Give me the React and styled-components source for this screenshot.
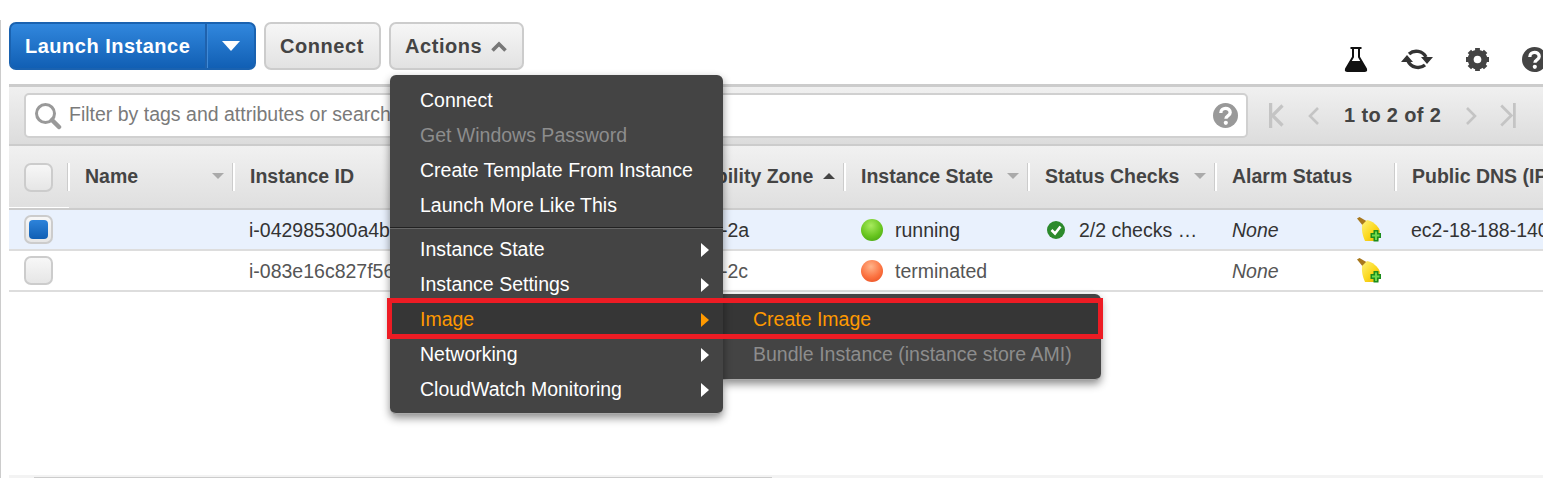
import React from 'react';
import styled, { createGlobalStyle } from 'styled-components';

const GlobalStyle = createGlobalStyle`
  html, body {
    margin: 0;
    padding: 0;
    background: #fff;
    overflow: hidden;
  }
  body {
    font-family: "Liberation Sans", Arial, sans-serif;
    color: #444;
  }
`;

const COLUMNS = '60px 165px 197px 217px 197px 184px 187px 180px 1fr';

const Page = styled.div`
  position: relative;
  width: 1543px;
  height: 478px;
  overflow: hidden;
  box-sizing: border-box;
  padding-left: 9px;
  display: flex;
  flex-direction: column;

  &::before {
    content: '';
    position: absolute;
    left: 0;
    top: 20px;
    bottom: 0;
    width: 1px;
    background: #ccc;
  }
`;

const Toolbar = styled.div`
  height: 84px;
  box-sizing: border-box;
  padding-top: 22px;
  display: flex;
  align-items: flex-start;
  gap: 8px;
`;

const SplitButton = styled.div`
  width: 247px;
  height: 48px;
  box-sizing: border-box;
  display: flex;
  border: 2px solid #1a62b0;
  border-radius: 7px;
  background: linear-gradient(#3187dd, #115fb4);
  color: #fff;
  font-weight: 700;
  font-size: 20px;
  overflow: hidden;
`;

const SplitLabel = styled.div`
  flex: 1;
  padding-left: 14px;
  line-height: 44px;
  letter-spacing: 0.5px;
`;

const SplitCaret = styled.div`
  width: 47px;
  border-left: 2px solid #1f62ad;
  box-shadow: inset 1px 0 0 #3f8ad8;
  display: flex;
  align-items: center;
  justify-content: center;
`;

const GreyButton = styled.div`
  width: ${(p) => p.$width}px;
  height: 48px;
  box-sizing: border-box;
  border: 2px solid #ccc;
  border-radius: 7px;
  background: linear-gradient(#f6f6f6, #e2e2e2);
  color: #444;
  font-weight: 700;
  font-size: 20px;
  letter-spacing: 0.55px;
  line-height: 44px;
  padding-left: 14px;
  display: flex;
  align-items: center;
  gap: 9px;
`;

const ToolIcons = styled.div`
  margin-left: auto;
  margin-right: -4px;
  padding-top: 24px;
  display: flex;
  align-items: center;
  gap: 33px;
  color: #444;
`;

const FilterBar = styled.div`
  height: 62px;
  box-sizing: border-box;
  border-top: 3px solid #ccc;
  border-bottom: 2px solid #ccc;
  background: linear-gradient(#f0f0f0, #dcdcdc);
  display: flex;
  align-items: center;
  padding-left: 15px;
`;

const FilterInput = styled.div`
  width: 1224px;
  height: 45px;
  box-sizing: border-box;
  background: #fff;
  border: 2px solid #d0d0d0;
  border-radius: 5px;
  display: flex;
  align-items: center;
  padding: 0 8px;
  color: #7a7a7a;
  font-size: 19.5px;
  gap: 7px;
`;

const FilterText = styled.span`
  flex: 1;
  white-space: nowrap;
  padding-bottom: 2px;
`;

const Pager = styled.div`
  display: flex;
  align-items: center;
  margin-left: 20px;
  gap: 20px;
`;

const PagerText = styled.span`
  font-weight: 700;
  font-size: 20px;
  letter-spacing: 0.35px;
  color: #444;
  margin: 0 3px;
  white-space: nowrap;
`;

const HeaderRow = styled.div`
  position: relative;
  display: grid;
  grid-template-columns: ${COLUMNS};
  height: 64px;
  box-sizing: border-box;
  background: linear-gradient(#f1f1f1, #dfdfdf);
  border-bottom: 2px solid #ccc;

  &::after {
    content: '';
    position: absolute;
    left: 0;
    bottom: 0;
    width: 60px;
    height: 1px;
    background: #fff;
  }
`;

const HeaderCell = styled.div`
  position: relative;
  display: flex;
  align-items: center;
  padding: 0 10px 0 ${(p) => p.$pad ?? 16}px;
  height: 60px;
  font-size: 19.5px;
  font-weight: 700;
  color: #444;
  white-space: nowrap;

  &::before {
    content: '';
    position: absolute;
    left: -2px;
    top: 17px;
    width: 1px;
    height: 28px;
    background: #ccc;
    box-shadow: 1px 0 0 #fff, 2px 0 0 #fff;
  }
`;

const HeaderLabel = styled.span`
  flex: 1;
  min-width: 0;
`;

const SortArrow = styled.span`
  width: 0;
  height: 0;
  border-left: 6px solid transparent;
  border-right: 6px solid transparent;
  ${(p) =>
    p.$up
      ? 'border-bottom: 6px solid #444;'
      : 'border-top: 6px solid #aaa;'}
`;

const CheckCell = styled.div`
  display: flex;
  align-items: center;
  padding-left: 15px;
`;

const CheckBox = styled.div`
  width: 29px;
  height: 29px;
  box-sizing: border-box;
  border: 2px solid #ccc;
  border-radius: 7px;
  background: linear-gradient(#f7f7f7, #e6e6e6);
  display: flex;
  align-items: center;
  justify-content: center;
`;

const CheckFill = styled.div`
  width: 19px;
  height: 19px;
  border-radius: 4px;
  background: linear-gradient(#2d83da, #115fb4);
`;

const Row = styled.div`
  display: grid;
  grid-template-columns: ${COLUMNS};
  height: 41px;
  box-sizing: border-box;
  background: ${(p) => (p.$selected ? '#e9f1fd' : '#fff')};
  border-bottom: 2px solid #ddd;
  font-size: 19.5px;
  color: ${(p) => (p.$selected ? '#333' : '#555')};
`;

const Cell = styled.div`
  display: flex;
  align-items: center;
  padding-left: ${(p) => p.$pad ?? 15}px;
  padding-top: 2px;
  gap: ${(p) => p.$gap ?? 12}px;
  white-space: nowrap;
  overflow: hidden;
  font-style: ${(p) => (p.$italic ? 'italic' : 'normal')};
`;

const AlarmText = styled.span`
  width: 125px;
`;

const StateDot = styled.span`
  width: 22px;
  height: 22px;
  border-radius: 50%;
  flex: none;
  margin-top: -2px;
  background: ${(p) =>
    p.$state === 'running'
      ? 'radial-gradient(circle at 45% 30%, #a8ea5e, #68c51f 55%, #3f9d10)'
      : 'radial-gradient(circle at 45% 30%, #ffb48a, #fb7240 55%, #e6481b)'};
`;

const BottomBar = styled.div`
  margin-top: auto;
  height: 3px;
  background: #f3f3f3;
  position: relative;

  &::after {
    content: '';
    position: absolute;
    left: 25px;
    bottom: 0;
    width: 738px;
    height: 1px;
    background: #ccc;
  }
`;

const Menu = styled.div`
  position: absolute;
  left: 390px;
  top: 75px;
  width: 333px;
  height: 339px;
  box-sizing: border-box;
  padding-top: 8px;
  background: #444;
  border-radius: 6px;
  border-bottom: 1px solid #aaa;
  box-shadow: 0 4px 8px rgba(0, 0, 0, 0.45);
  z-index: 3;
`;

const SubMenu = styled.div`
  position: absolute;
  left: 723px;
  top: 294px;
  width: 378px;
  height: 86px;
  box-sizing: border-box;
  padding-top: 8px;
  background: #444;
  border-radius: 0 6px 6px 0;
  border-bottom: 1px solid #aaa;
  box-shadow: 0 4px 8px rgba(0, 0, 0, 0.45);
  z-index: 2;
`;

const MenuItem = styled.div`
  height: 35px;
  display: flex;
  align-items: center;
  justify-content: space-between;
  padding: 0 14px 0 30px;
  font-size: 19.5px;
  white-space: nowrap;
  color: ${(p) => (p.$active ? '#ff9900' : p.$disabled ? '#8d8d8d' : '#fff')};
  background: ${(p) => (p.$active ? '#363636' : 'transparent')};
`;

const MenuDivider = styled.div`
  height: 1px;
  margin: 4px 0 3px;
  background: #222;
  border-bottom: 1px solid #666;
`;

const SubArrow = styled.span`
  width: 0;
  height: 0;
  border-top: 7px solid transparent;
  border-bottom: 7px solid transparent;
  border-left: 8px solid ${(p) => (p.$active ? '#ff9900' : '#fff')};
`;

const Highlight = styled.div`
  position: absolute;
  left: 387px;
  top: 298px;
  width: 716px;
  height: 41px;
  box-sizing: border-box;
  border: 5px solid #ed1c24;
  z-index: 4;
`;

const Broom = ({ id }) => (
  <svg width="24" height="25" viewBox="0 0 24 25" style={{ flex: 'none', marginTop: -2 }}>
    <defs>
      <linearGradient id={id} x1="0" y1="0" x2="1" y2="1">
        <stop offset="0" stopColor="#fff27a" />
        <stop offset="0.55" stopColor="#fbd81e" />
        <stop offset="1" stopColor="#e6ae00" />
      </linearGradient>
    </defs>
    <path d="M0 1.500 L2.500 0 L11 5 L7 10 Z" fill="#a8781c" />
    <path d="M5 8 L10 3 C15 4 21 8 23 14 L21 24 L8 24 C5.500 19 4.500 13 5 8 Z" fill={`url(#${id})`} />
    <path d="M16.500 13 h5 v3 h2.500 v5 h-2.500 v3.500 h-5 v-3.500 h-3 v-5 h3 Z" fill="#1c8c1c" />
    <path d="M18 14.500 h2 v3 h2.500 v2 h-2.500 v3.500 h-2 v-3.500 h-3 v-2 h3 Z" fill="#6fd84c" />
  </svg>
);

const Chevron = ({ flip, size = 14, color = '#aaa', left }) => (
  <svg width={size} height={size + 6} viewBox="0 0 14 20" fill="none" stroke={color} strokeWidth="2.6">
    {left ? <path d="M1.5 0 V20" /> : null}
    <path d={flip ? 'M3 2 L11 10 L3 18' : 'M11 2 L3 10 L11 18'} />
  </svg>
);

const Help = ({ size, color }) => (
  <svg width={size} height={size} viewBox="0 0 24 24">
    <circle cx="12" cy="12" r="12" fill={color} />
    <path d="M7.5 9.5 C7.5 3.8 16.5 3.8 16.5 9.2 C16.5 12.5 12.4 12.2 12.4 15" fill="none" stroke="#fff" strokeWidth="3.2" />
    <circle cx="12.3" cy="19" r="2" fill="#fff" />
  </svg>
);

const menuTop = ['Connect', 'Get Windows Password', 'Create Template From Instance', 'Launch More Like This'];
const menuSub = ['Instance State', 'Instance Settings', 'Image', 'Networking', 'CloudWatch Monitoring'];

export default function App() {
  return (
    <Page>
      <GlobalStyle />
      <Toolbar>
        <SplitButton>
          <SplitLabel>Launch Instance</SplitLabel>
          <SplitCaret>
            <svg width="18" height="10" viewBox="0 0 18 10"><path d="M0 0 H18 L9 10 Z" fill="#fff" /></svg>
          </SplitCaret>
        </SplitButton>
        <GreyButton $width={117}>Connect</GreyButton>
        <GreyButton $width={135}>
          Actions
          <svg width="16" height="11" viewBox="0 0 16 11" fill="none" stroke="#777" strokeWidth="3.6">
            <path d="M1.500 9.500 L8 3 L14.500 9.500" />
          </svg>
        </GreyButton>
        <ToolIcons>
          <svg width="24" height="25" viewBox="0 0 24 25">
            <path d="M6.500 1 H17.500 M9 1 V10 L2 22 C1.500 23.500 2 24 3.500 24 H20.500 C22 24 22.500 23.500 22 22 L15 10 V1" fill="none" stroke="#111" strokeWidth="2" />
            <path d="M6.500 14 H17.500 L23 24 H1 Z" fill="#111" />
          </svg>
          <svg width="32" height="26" viewBox="0 0 32 26" fill="none">
            <path d="M8 8 A11 11 0 0 1 25 11" stroke="#333" strokeWidth="3.400" />
            <path d="M24 19 A11 11 0 0 1 7 15" stroke="#333" strokeWidth="3.400" />
            <path d="M20 11 H32 L26 18 Z M0 16 H12 L6 9 Z" fill="#333" />
          </svg>
          <svg width="23" height="23" viewBox="0 0 24 24">
            <circle cx="12" cy="12" r="7" fill="none" stroke="#444" strokeWidth="6.500" />
            <path d="M12 0 V24 M0 12 H24 M3.500 3.500 L20.500 20.500 M20.500 3.500 L3.500 20.500" stroke="#444" strokeWidth="5" />
            <circle cx="12" cy="12" r="4" fill="#fff" />
          </svg>
          <Help size={25} color="#444" />
        </ToolIcons>
      </Toolbar>

      <FilterBar>
        <FilterInput>
          <svg width="28" height="28" viewBox="0 0 28 28" fill="none">
            <circle cx="11.500" cy="11.500" r="9" stroke="#999" strokeWidth="3" />
            <path d="M18 18 L25 25" stroke="#999" strokeWidth="4.500" strokeLinecap="round" />
          </svg>
          <FilterText>Filter by tags and attributes or search by keyword</FilterText>
          <Help size={25} color="#999" />
        </FilterInput>
        <Pager>
          <Chevron left color="#c4c4c4" size={19} />
          <Chevron color="#c4c4c4" />
          <PagerText>1 to 2 of 2</PagerText>
          <Chevron flip color="#c4c4c4" />
          <svg width="19" height="25" viewBox="0 0 14 20" fill="none" stroke="#c4c4c4" strokeWidth="2.200">
            <path d="M12.500 0 V20 M2 2 L10 10 L2 18" />
          </svg>
        </Pager>
      </FilterBar>

      <HeaderRow>
        <CheckCell><CheckBox /></CheckCell>
        <HeaderCell>
          <HeaderLabel>Name</HeaderLabel>
          <SortArrow />
        </HeaderCell>
        <HeaderCell><HeaderLabel>Instance ID</HeaderLabel></HeaderCell>
        <HeaderCell><HeaderLabel>Instance Type</HeaderLabel></HeaderCell>
        <HeaderCell $pad={11}>
          <HeaderLabel>Availability Zone</HeaderLabel>
          <SortArrow $up />
        </HeaderCell>
        <HeaderCell>
          <HeaderLabel>Instance State</HeaderLabel>
          <SortArrow />
        </HeaderCell>
        <HeaderCell>
          <HeaderLabel>Status Checks</HeaderLabel>
          <SortArrow />
        </HeaderCell>
        <HeaderCell><HeaderLabel>Alarm Status</HeaderLabel></HeaderCell>
        <HeaderCell><HeaderLabel>Public DNS (IPv4)</HeaderLabel></HeaderCell>
      </HeaderRow>

      <Row $selected>
        <CheckCell>
          <CheckBox><CheckFill /></CheckBox>
        </CheckCell>
        <Cell />
        <Cell>i-042985300a4b1c2d3</Cell>
        <Cell>t2.micro</Cell>
        <Cell $pad={9}>us-east-2a</Cell>
        <Cell $pad={16}><StateDot $state="running" />running</Cell>
        <Cell $pad={18} $gap={14}>
          <svg width="18" height="18" viewBox="0 0 18 18" style={{ flex: 'none', marginTop: -2 }}>
            <circle cx="9" cy="9" r="9" fill="#2c8a2c" />
            <path d="M4.500 9 L8 12.500 L13.500 5.500" fill="none" stroke="#fff" strokeWidth="2.600" />
          </svg>
          2/2 checks …
        </Cell>
        <Cell $pad={16} $gap={0} $italic>
          <AlarmText>None</AlarmText>
          <Broom id="broom-a" />
        </Cell>
        <Cell>ec2-18-188-140-25.us-east-2</Cell>
      </Row>
      <Row>
        <CheckCell><CheckBox /></CheckCell>
        <Cell />
        <Cell>i-083e16c827f56a1b9</Cell>
        <Cell>t2.micro</Cell>
        <Cell $pad={9}>us-east-2c</Cell>
        <Cell $pad={16}><StateDot $state="terminated" />terminated</Cell>
        <Cell />
        <Cell $pad={16} $gap={0} $italic>
          <AlarmText>None</AlarmText>
          <Broom id="broom-b" />
        </Cell>
        <Cell />
      </Row>

      <BottomBar />

      <Menu>
        {menuTop.map((label) => (
          <MenuItem key={label} $disabled={label === 'Get Windows Password'}>{label}</MenuItem>
        ))}
        <MenuDivider />
        {menuSub.map((label) => (
          <MenuItem key={label} $active={label === 'Image'}>
            {label}
            <SubArrow $active={label === 'Image'} />
          </MenuItem>
        ))}
      </Menu>
      <SubMenu>
        <MenuItem $active>Create Image</MenuItem>
        <MenuItem $disabled>Bundle Instance (instance store AMI)</MenuItem>
      </SubMenu>
      <Highlight />
    </Page>
  );
}
